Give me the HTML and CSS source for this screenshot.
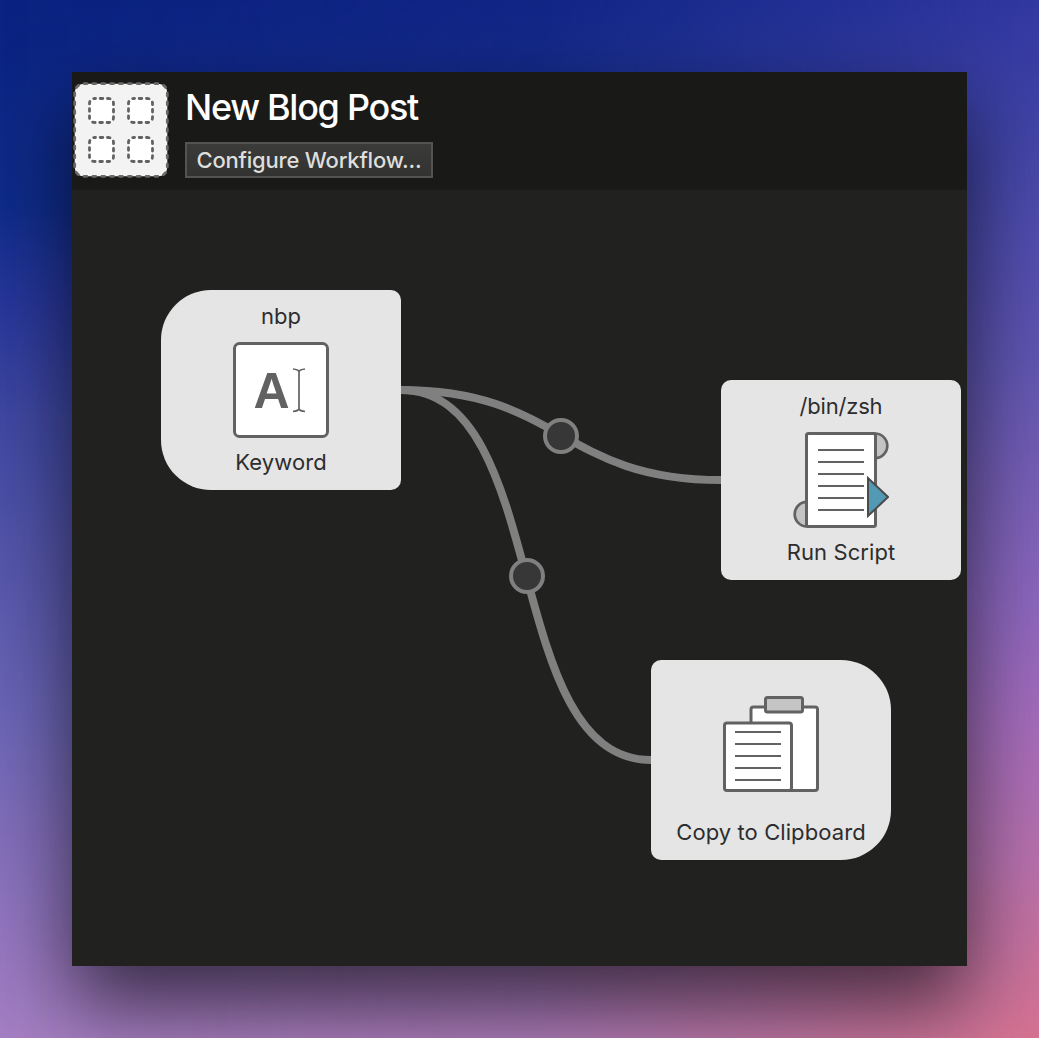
FILE: index.html
```html
<!DOCTYPE html>
<html lang="en">
<head>
<meta charset="utf-8">
<title>New Blog Post</title>
<link rel="stylesheet" href="styles.css">
</head>
<body>
<div class="desktop">
  <main class="window">
    <header class="header">
      <svg class="workflow-icon" viewBox="0 0 96 96" width="96" height="96">
        <rect x="1.700" y="1.700" width="92.600" height="92.600" rx="9" fill="#f3f3f3"/>
        <rect x="1.700" y="1.700" width="92.600" height="92.600" rx="9" fill="none" stroke="#6a6a6a" stroke-width="2.800" stroke-linecap="round" stroke-dasharray="2.800 6.070" stroke-dashoffset="-.4"/>
        <g fill="#fff" stroke="#626262" stroke-width="2.800" stroke-linecap="round" stroke-dasharray="2.600 4.680" stroke-dashoffset="1.580">
          <rect x="16.500" y="16.500" width="24" height="24" rx="5"/>
          <rect x="55.500" y="16.500" width="24" height="24" rx="5"/>
          <rect x="16.500" y="55.500" width="24" height="24" rx="5"/>
          <rect x="55.500" y="55.500" width="24" height="24" rx="5"/>
        </g>
      </svg>
      <div class="heading">
        <h1 class="title">New Blog Post</h1>
        <button class="configure">Configure Workflow...</button>
      </div>
    </header>
    <section class="canvas">
      <svg class="wires" viewBox="0 0 895 776" width="895" height="776">
        <g fill="none" stroke="#808080" stroke-width="8">
          <path d="M329 200C489 200 489 290 649 290"/>
          <path d="M329 200C479 200 429 570 579 570"/>
        </g>
        <g fill="#373737" stroke="#808080" stroke-width="4">
          <circle cx="489" cy="246" r="16"/>
          <circle cx="455" cy="386" r="16"/>
        </g>
      </svg>
      <article class="node node-keyword">
        <span class="label">nbp</span>
        <svg class="icon" viewBox="0 0 96 96" width="96" height="96">
          <rect x="1.500" y="1.500" width="93" height="93" rx="5" fill="#fff" stroke="#626262" stroke-width="3"/>
          <text class="glyph" x="38.500" y="66" text-anchor="middle">A</text>
          <path d="M60 27q5 .5 6 2.500q1-2 6-2.500M66 29v38M60 69.500q5-.5 6-2.500q1 2 6 2.500" fill="none" stroke="#626262" stroke-width="1.700"/>
        </svg>
        <span class="label">Keyword</span>
      </article>
      <article class="node node-script">
        <span class="label path">/bin/zsh</span>
        <svg class="icon" viewBox="0 0 96 96" width="96" height="96">
          <g fill="#c4c4c4" stroke="#626262" stroke-width="2.700">
            <path d="M82 1.500a12.300 12.300 0 0 1 0 24.600z"/>
            <path d="M14 94.500a12.300 12.300 0 0 1 0-24.600z"/>
          </g>
          <rect x="13.500" y="1.500" width="69" height="93" rx="2" fill="#fff" stroke="#626262" stroke-width="3"/>
          <path d="M25 18h46M25 30h46M25 42h46M25 54h46M25 66h46M25 78h46" stroke="#626262" stroke-width="2"/>
          <path d="M75 46v38l20-19z" fill="#5299b3" stroke="#4b4b4b" stroke-width="2"/>
        </svg>
        <span class="label">Run Script</span>
      </article>
      <article class="node node-clipboard">
        <span class="label"></span>
        <svg class="icon" viewBox="0 0 96 96" width="96" height="96">
          <g fill="#fff" stroke="#626262" stroke-width="3">
            <rect x="28" y="11" width="66.500" height="83.500" rx="2.500"/>
            <rect x="42.500" y="1.500" width="37" height="14.500" rx="2" fill="#c4c4c4"/>
            <rect x="1.500" y="27" width="67" height="67.500" rx="2.500"/>
          </g>
          <path d="M12 36h46M12 48h46M12 60h46M12 72h46M12 84h46" stroke="#626262" stroke-width="2"/>
        </svg>
        <span class="label">Copy to Clipboard</span>
      </article>
    </section>
  </main>
</div>
</body>
</html>
```
FILE: styles.css
```css
* { box-sizing: border-box; }

body {
  margin: 0;
  font-family: Inter, "Liberation Sans", sans-serif;
}

.desktop {
  position: relative;
  height: 1038px;
  padding: 72px;
  overflow: hidden;
  isolation: isolate;
  background: linear-gradient(180deg, #0a2280 0%, #0f2c8b 20%, #27369a 29%, #3f48a2 40%, #5254aa 52%, #6965b6 68%, #8570bc 82%, #a57fc4 100%);
}

/* Warm side of the wallpaper, fading out towards the left. */
.desktop::before {
  content: "";
  position: absolute;
  inset: 0;
  z-index: -1;
  background: linear-gradient(180deg, #31389f 0%, #4d4bab 20%, #5f55b0 34%, #7a60b6 48%, #8f67bd 59%, #a66cba 70%, #b871ac 83%, #d67290 100%);
  mask-image: linear-gradient(90deg, transparent 0%, rgba(0, 0, 0, .2) 52%, #000 100%);
}

.window {
  width: 895px;
  height: 894px;
  background: #21211f;
  box-shadow: 0 38px 76px rgba(0, 0, 0, .64);
}

.header {
  display: flex;
  gap: 16px;
  height: 118px;
  padding: 10px 0 0 1px;
  background: #191917;
}

.workflow-icon { flex: none; }

.heading { display: flex; flex-direction: column; align-items: flex-start; }

.title {
  height: 60px;
  margin: 0;
  color: #fff;
  font-size: 36px;
  font-weight: 500;
  line-height: 50px;
  letter-spacing: -1.3px;
  white-space: nowrap;
}

.configure {
  width: 248px;
  height: 36px;
  padding: 0;
  border: 2px solid #535350;
  background: linear-gradient(#3b3b3a, #323230);
  color: #dededd;
  font-family: inherit;
  font-size: 22px;
  font-weight: 500;
  line-height: 32px;
  letter-spacing: -.2px;
  white-space: nowrap;
}

.canvas { position: relative; height: 776px; }

.wires { display: block; }

.node {
  position: absolute;
  display: flex;
  flex-direction: column;
  align-items: center;
  width: 240px;
  height: 200px;
  padding-top: 10px;
  border-radius: 10px;
  background: #e5e5e5;
}

.node-keyword { left: 89px; top: 100px; border-radius: 50px 10px 10px 50px; }
.node-script { left: 649px; top: 190px; }
.node-clipboard { left: 579px; top: 470px; border-radius: 10px 50px 50px 10px; }

.label {
  height: 32px;
  color: #2d2d2d;
  font-size: 22px;
  line-height: 32px;
  letter-spacing: .08px;
  white-space: nowrap;
}

.path { letter-spacing: -.2px; }

.icon { flex: none; display: block; margin: 10px 0 8px; }

.node-clipboard .icon { margin-top: -6px; margin-bottom: 24px; }

.glyph {
  fill: #626262;
  font-family: "Liberation Sans", sans-serif;
  font-size: 50px;
  font-weight: 700;
}
```
